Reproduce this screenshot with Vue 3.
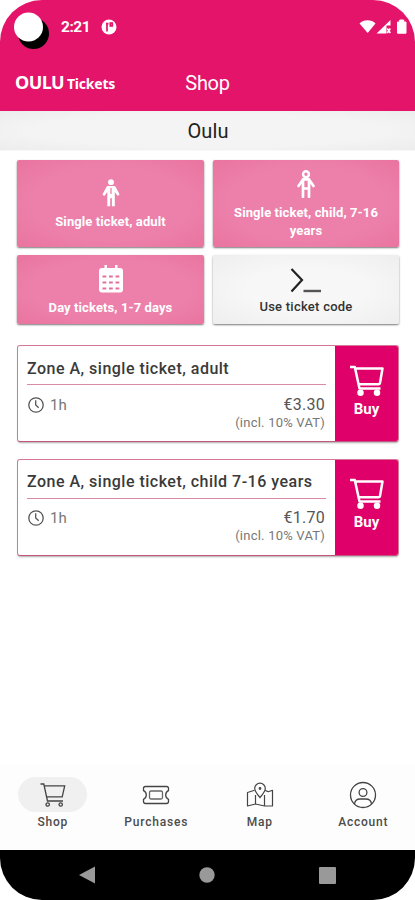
<script setup>
const tiles = [
  { icon: 'adult', label: 'Single ticket, adult' },
  { icon: 'child', label: 'Single ticket, child, 7-16 years' },
  { icon: 'calendar', label: 'Day tickets, 1-7 days' },
  { icon: 'code', label: 'Use ticket code' },
]
const tickets = [
  { name: 'Zone A, single ticket, adult', price: '€3.30', cls: 'first' },
  { name: 'Zone A, single ticket, child 7-16 years', price: '€1.70', cls: 'second' },
]
const tabs = [
  { id: 'shop', label: 'Shop' },
  { id: 'purchases', label: 'Purchases' },
  { id: 'map', label: 'Map' },
  { id: 'account', label: 'Account' },
]
</script>

<template>
  <div class="phone">
    <header class="top">
      <svg class="camera" width="40" height="42" viewBox="0 0 40 42">
        <circle cx="23.500" cy="25.500" r="15.500" fill="#000" />
        <circle cx="18.500" cy="19" r="14.500" fill="#fff" />
      </svg>
      <div class="status">
        <span class="time">2:21</span>
        <svg class="notice" width="16" height="16" viewBox="0 0 16 16">
          <circle cx="8" cy="8" r="7.500" fill="#fff" />
          <path d="M6 12.500V4.600M5 4.600h2.500M9.300 4.200h2v2.600h-2z" fill="none" stroke="#e3146a" stroke-width="1.700" />
        </svg>
        <svg class="signals" width="50" height="16" viewBox="0 0 50 16">
          <path d="M.500 4.500C4.500.300 12.500.300 16.500 4.500L8.700 14z" fill="#fff" />
          <path d="M17.500 14.500L31.500 1v5.500h-4v8z" fill="#fff" />
          <path d="M28.300 9.500l3 4.500M31.300 9.500l-3 4.500" stroke="#fff" stroke-width="1.600" />
          <path d="M38.500 3h2.200V1h4v2h2.300v11.200h-8.500z" fill="#fff" stroke="#fff" stroke-linejoin="round" />
        </svg>
      </div>
      <div class="titlebar">
        <div class="brand"><b class="oulu">OULU</b><b class="tick">Tickets</b></div>
        <h1>Shop</h1>
      </div>
    </header>

    <div class="city">Oulu</div>

    <main>
      <div class="tiles">
        <div v-for="t in tiles" :key="t.icon" class="tile" :class="t.icon">
          <svg v-if="t.icon === 'adult'" width="20" height="28" viewBox="0 0 20 28">
            <circle cx="10" cy="3.200" r="2.900" fill="#fff" />
            <path d="M7 7h6q1.200 0 1.800 1.300L18.600 15.500l-1.900 1.600L13.800 13v14.300h-2.900v-8H9.200v8H6.300V13l-3 4.100L1.400 15.500l3.900-7.200Q5.800 7 7 7z" fill="#fff" />
            <path d="M10 9v6" stroke="#ee80aa" stroke-width="1.300" />
          </svg>
          <svg v-else-if="t.icon === 'child'" width="20" height="28" viewBox="0 0 20 28">
            <circle cx="10" cy="4.200" r="2.900" fill="none" stroke="#fff" stroke-width="2.400" />
            <path d="M7 9.500L2.500 16M13 9.500l4.500 6.500M7 10v17M13 10v17M7 9.300h6M7 18.500h6" fill="none" stroke="#fff" stroke-width="2.700" stroke-linecap="round" />
          </svg>
          <svg v-else-if="t.icon === 'calendar'" width="26" height="28" viewBox="0 0 26 28">
            <path d="M4 3h2.500V0H9v3h8V0h2.500v3H22q3 0 3 3v18.500q0 3-3 3H4q-3 0-3-3V6q0-3 3-3z" fill="#fff" />
            <path d="M4.500 11.500h3.800M11 11.500h3.800M17.500 11.500h3.800M4.500 17.500h3.800M11 17.500h3.800M17.500 17.500h3.800M4.500 23.500h3.800M11 23.500h3.800M17.500 23.500h3.800" stroke="#e570a0" stroke-width="2" />
          </svg>
          <svg v-else width="34" height="28" viewBox="0 0 34 28">
            <path d="M2.500 2L13 13 2.500 24.500" fill="none" stroke="#222" stroke-width="2.200" />
            <path d="M14.500 24H32" stroke="#555" stroke-width="2.400" />
          </svg>
          <span>{{ t.label }}</span>
        </div>
      </div>

      <article v-for="t in tickets" :key="t.price" class="ticket" :class="t.cls">
        <div class="info">
          <h2>{{ t.name }}</h2>
          <div class="detail">
            <div class="duration">
              <svg width="16" height="16" viewBox="0 0 16 16" fill="none" stroke="#555" stroke-width="1.300">
                <circle cx="8" cy="8" r="7.200" /><path d="M7.700 3.200V8l3 2.700" />
              </svg>
              <span>1h</span>
            </div>
            <div class="cost">
              <div class="price">{{ t.price }}</div>
              <div class="vat">(incl. 10% VAT)</div>
            </div>
          </div>
        </div>
        <div class="buy">
          <svg width="36" height="31" viewBox="0 0 36 31" fill="none" stroke="#fff" stroke-width="2.500" stroke-linejoin="round">
            <path d="M1 2h4.800l4.700 21.500h21M6.500 3.500h27l-2.500 14.500q-.200 1.300-1.500 1.300H9.800" />
            <circle cx="11.500" cy="27.700" r="2" fill="#fff" /><circle cx="28" cy="27.700" r="2" fill="#fff" />
          </svg>
          <span>Buy</span>
        </div>
      </article>
    </main>

    <nav class="tabs">
      <div v-for="tab in tabs" :key="tab.id" class="tab" :class="tab.id">
        <div class="pill">
          <svg v-if="tab.id === 'shop'" width="28" height="26" viewBox="0 0 28 26" fill="none" stroke="#444" stroke-width="1.300">
            <path d="M1.500 2h3.300l3.700 17h15.500M5.200 3.800h20.500l-2.500 11H7.600" />
            <circle cx="8.700" cy="22.500" r="1.700" /><circle cx="21.700" cy="22.500" r="1.700" />
          </svg>
          <svg v-else-if="tab.id === 'purchases'" width="28" height="26" viewBox="0 0 28 26" fill="none" stroke="#444" stroke-width="1.300">
            <path d="M3.500 4.500h21q2 0 2 2v2.200q-2.800 1.300-2.800 4.300t2.800 4.300v2.200q0 2-2 2h-21q-2 0-2-2v-2.200q2.800-1.300 2.800-4.300T1.500 8.700V6.500q0-2 2-2z" />
            <rect x="7.500" y="9" width="13" height="8" rx="1.500" stroke="#666" />
          </svg>
          <svg v-else-if="tab.id === 'map'" width="28" height="26" viewBox="0 0 28 26" fill="none" stroke="#444" stroke-width="1.200">
            <path d="M14 15.500Q8.700 9.500 8.700 6.500a5.300 5.300 0 0 1 10.600 0Q19.300 9.500 14 15.500z" />
            <circle cx="14" cy="6.500" r=".800" />
            <path d="M8.500 8.200L1.500 10.500v13.500l8-2 9 2 8 0V8.300l-4.200 1.400-3-1.300M9.500 13v9M18.500 13v11" stroke-linejoin="round" />
          </svg>
          <svg v-else width="28" height="28" viewBox="0 0 28 28" fill="none" stroke="#444" stroke-width="1.300">
            <circle cx="14" cy="14" r="12.500" /><circle cx="14" cy="11.500" r="3.900" />
            <path d="M5.500 23q.500-5 5.700-5h5.600q5.200 0 5.700 5" />
          </svg>
        </div>
        <span>{{ tab.label }}</span>
      </div>
    </nav>

    <footer class="system">
      <svg width="16" height="18" viewBox="0 0 16 18"><path d="M0 9L16 .500v17z" fill="#999" /></svg>
      <svg width="16" height="16" viewBox="0 0 16 16"><circle cx="8" cy="8" r="7.700" fill="#999" /></svg>
      <svg width="17" height="17" viewBox="0 0 17 17"><rect width="17" height="17" rx="1" fill="#999" /></svg>
    </footer>
  </div>
</template>

<style>
body { margin: 0; background: #fff; }
</style>

<style scoped>
* { box-sizing: border-box; }
svg { display: block; flex: none; }
.phone {
  width: 415px; height: 900px; overflow: hidden; position: relative;
  display: flex; flex-direction: column; background: #fff;
  border-radius: 42px; font-family: Roboto, sans-serif; color: #444;
}
.top { height: 111px; background: #e3146a; color: #fff; flex: none; }
.camera { position: absolute; left: 10px; top: 8px; }
.status { display: flex; align-items: center; height: 54px; padding: 0 6px 0 61px; }
.time { font-size: 15.5px; font-weight: 700; line-height: 20px; letter-spacing: -0.5px; width: 40px; }
.signals { margin-left: auto; }
.titlebar { display: grid; grid-template-columns: 1fr auto 1fr; height: 57px; align-items: center; padding-left: 15px; }
.brand { display: flex; align-items: baseline; gap: 3px; font-family: "Noto Sans", sans-serif; line-height: 24px; }
.oulu { font-size: 18px; letter-spacing: -0.6px; }
.tick { font-size: 14px; letter-spacing: -0.2px; }
h1 { margin: 0 15px 0 0; font-size: 20px; line-height: 24px; font-weight: 400; letter-spacing: -0.3px; }
.city {
  height: 40px; line-height: 40px; flex: none; text-align: center; font-size: 20px; letter-spacing: 0.1px; color: #222;
  padding-left: 1px;
  background: radial-gradient(ellipse at center, #f4f4f4 60%, #ececec 100%);
  border-bottom: 1px solid #f8f8f8;
}
main { padding: 9px 16px 0 17px; flex: 1; }
.tiles { display: grid; grid-template-columns: 187px 186px; grid-template-rows: 87px 69px; gap: 8px 9px; }
.tile {
  display: flex; flex-direction: column; align-items: center; justify-content: center; padding-top: 3px;
  border-radius: 2px; color: #fff; text-align: center; font-size: 13px; font-weight: 700; line-height: 18px;
  letter-spacing: 0.1px;
  background: radial-gradient(ellipse at center, #ec80aa 60%, #e9749f 100%);
  box-shadow: 0 1px 2px #0008;
}
.tile span { padding: 0 18px; margin-top: 6px; }
.code {
  color: #333; font-weight: 500; letter-spacing: 0.25px;
  background: radial-gradient(ellipse at center, #f7f7f7 45%, #eee 100%);
}
.tile.code { padding-top: 4px; }
.tile.code span { margin-top: 3px; }
.ticket {
  display: flex; height: 97px; margin-top: 17px; border: 1px solid #d67795; border-bottom-color: #c4557f;
  border-radius: 3px; overflow: hidden; background: #fff; box-shadow: 0 2px 2px -1px #0005;
}
.first { margin-top: 21px; }
.info { flex: 1; padding: 0 9px; }
h2 {
  margin: 0; height: 39px; line-height: 45px; font-size: 16px; font-weight: 500; letter-spacing: 0.49px; color: #3a3a3a;
  border-bottom: 1px solid #d98aa5; white-space: nowrap;
}
.detail { display: flex; justify-content: space-between; padding-top: 10px; }
.second h2 { line-height: 43px; }
.second .detail { padding-top: 9px; }
.duration { display: flex; gap: 6px; height: 19px; align-items: center; font-size: 15px; padding-left: 1px; color: #777; }
.cost { text-align: right; padding-right: 1px; }
.price { font-size: 16px; line-height: 19px; color: #555; letter-spacing: 0.25px; }
.vat { font-size: 13px; line-height: 17px; color: #777; letter-spacing: 0.22px; }
.buy {
  width: 63px; background: #e00069; color: #fff; display: flex; flex-direction: column; align-items: center;
  padding-top: 19px; font-size: 15px; line-height: 18px; font-weight: 700;
}
.buy span { margin-top: 4px; }
.second .buy { padding-top: 18px; }
.tabs { height: 86px; flex: none; display: grid; grid-template-columns: repeat(4, 1fr); background: #fdfdfd; padding: 13px 0 0 1px; }
.tab { display: flex; flex-direction: column; align-items: center; font-size: 12px; line-height: 16px; font-weight: 500; letter-spacing: 0.8px; color: #4c4c4c; }
.pill { width: 69px; height: 35px; border-radius: 18px; display: flex; align-items: center; justify-content: center; }
.shop .pill { background: #f0f0f0; }
.tab span { margin-top: 2px; }
.system {
  height: 50px; flex: none; background: #000; display: flex; align-items: center; justify-content: space-between;
  padding: 0 79px;
}
</style>
